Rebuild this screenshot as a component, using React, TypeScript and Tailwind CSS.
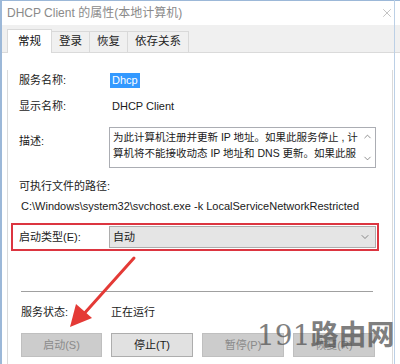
import { ChevronDown, ChevronUp, X } from 'lucide-react';

const font = { fontFamily: '"Liberation Sans", "Noto Sans CJK SC", sans-serif' };

export default function App() {
  const tabs = ['常规', '登录', '恢复', '依存关系'];

  return (
    <div
      className="relative w-[400px] h-[364px] overflow-hidden bg-white text-[11px] text-[#1a1a1a]"
      style={font}
    >
      <div className="absolute left-0 top-0 bottom-0 w-[2px] bg-[#9cb8d8]" />
      <div className="absolute right-[5px] top-0 bottom-0 w-[1px] bg-[#bcd0e6]" />

      {/* title bar */}
      <div className="h-[25px] border-t border-[#9cb8d8] flex items-center justify-between pl-[7px] pr-[6px]">
        <span className="text-[#8a8a8a] text-[12px]">DHCP Client 的属性(本地计算机)</span>
        <X className="w-[14px] h-[14px] text-[#9a9a9a]" strokeWidth={1} />
      </div>

      {/* tabs */}
      <div className="h-[28px] bg-[#f0f0f0] flex items-end pl-[7px] pr-[7px] border-b border-[#dadada]">
        {tabs.map((t, i) => (
          <div
            key={t}
            className={
              i === 0
                ? 'h-[24px] px-[10px] bg-white border border-b-0 border-[#d9d9d9] flex items-center -mb-[1px] text-[#111] text-[11.5px]'
                : 'h-[21px] px-[7px] bg-[#f0f0f0] border-t border-r border-[#d9d9d9] flex items-center text-[#222] text-[11.5px]'
            }
          >
            {t}
          </div>
        ))}
      </div>

      {/* content panel */}
      <div className="ml-[7px] mr-[7px] h-[311px] border-l border-r border-[#dadada] bg-white pl-[11px] pr-[12px]">
        <div className="mt-[17px] h-[20px] flex items-center">
          <span className="w-[91px]">服务名称:</span>
          <span className="bg-[#3399ff] text-white px-[2px] leading-[15px]">Dhcp</span>
        </div>
        <div className="mt-[6px] h-[20px] flex items-center">
          <span className="w-[93px]">显示名称:</span>
          <span>DHCP Client</span>
        </div>
        <div className="mt-[11px] flex">
          <span className="w-[90px] pt-[6px]">描述:</span>
          <div className="w-[267px] h-[41px] border border-[#abadb3] flex">
            <div className="flex-1 pl-[3px] pt-[1px] leading-[16px] text-[10.5px] overflow-hidden">
              <div className="whitespace-nowrap">为此计算机注册并更新 IP 地址。如果此服务停止 , 计</div>
              <div className="whitespace-nowrap">算机将不能接收动态 IP 地址和 DNS 更新。如果此服</div>
            </div>
            <div className="w-[16px] flex flex-col justify-between items-center py-[3px] text-[#606060]">
              <ChevronUp className="w-[11px] h-[11px]" strokeWidth={1.5} />
              <ChevronDown className="w-[11px] h-[11px]" strokeWidth={1.5} />
            </div>
          </div>
        </div>
        <div className="mt-[8px] h-[20px] flex items-center">可执行文件的路径:</div>
        <div className="h-[20px] flex items-center pl-[2px] whitespace-nowrap">
          C:\Windows\system32\svchost.exe -k LocalServiceNetworkRestricted
        </div>

        <div className="mt-[7px] -ml-[8px] w-[368px] h-[28px] border-2 border-[#dc3540] flex items-center pl-[6px] pr-[1px]">
          <span className="w-[90px]">启动类型(E):</span>
          <div className="flex-1 h-[22px] bg-[#e5e5e5] border border-[#adadad] flex items-center justify-between pl-[3px] pr-[4px]">
            <span>自动</span>
            <ChevronDown className="w-[12px] h-[12px] text-[#666]" strokeWidth={1.5} />
          </div>
        </div>

        <div className="mt-[40px] ml-[2px] w-[352px] h-[1px] bg-[#a0a0a0]" />

        <div className="mt-[10px] h-[20px] flex items-center pl-[2px]">
          <span className="w-[90px]">服务状态:</span>
          <span>正在运行</span>
        </div>

        <div className="mt-[11px] flex gap-[9px] pl-[2px]">
          <div className="w-[81px] h-[24px] bg-[#cccccc] border border-[#bfbfbf] flex items-center justify-center text-[#8a8a8a]">
            启动(S)
          </div>
          <div className="w-[82px] h-[24px] bg-[#e1e1e1] border border-[#adadad] flex items-center justify-center">
            停止(T)
          </div>
          <div className="w-[82px] h-[24px] bg-[#cccccc] border border-[#bfbfbf] flex items-center justify-center text-[#8a8a8a]">
            暂停(P)
          </div>
          <div className="w-[82px] h-[24px] bg-[#cccccc] border border-[#bfbfbf] flex items-center justify-center text-[#8a8a8a]">
            恢复(R)
          </div>
        </div>
      </div>

      {/* red arrow */}
      <svg className="absolute left-0 top-0" width="400" height="364">
        <line x1="134" y1="258" x2="82" y2="316" stroke="#e43a36" strokeWidth="3" strokeLinecap="round" />
        <polygon points="70,327 76,304 92,318" fill="#e43a36" />
      </svg>

      {/* watermark */}
      <div
        className="absolute left-[257px] top-[318px] text-[28px] leading-[36px] text-[#555] opacity-75 font-bold whitespace-nowrap"
        style={{ fontFamily: '"DejaVu Serif", "Noto Sans CJK SC", serif' }}
      >
        <span className="font-normal">191</span>路由网
      </div>
    </div>
  );
}
